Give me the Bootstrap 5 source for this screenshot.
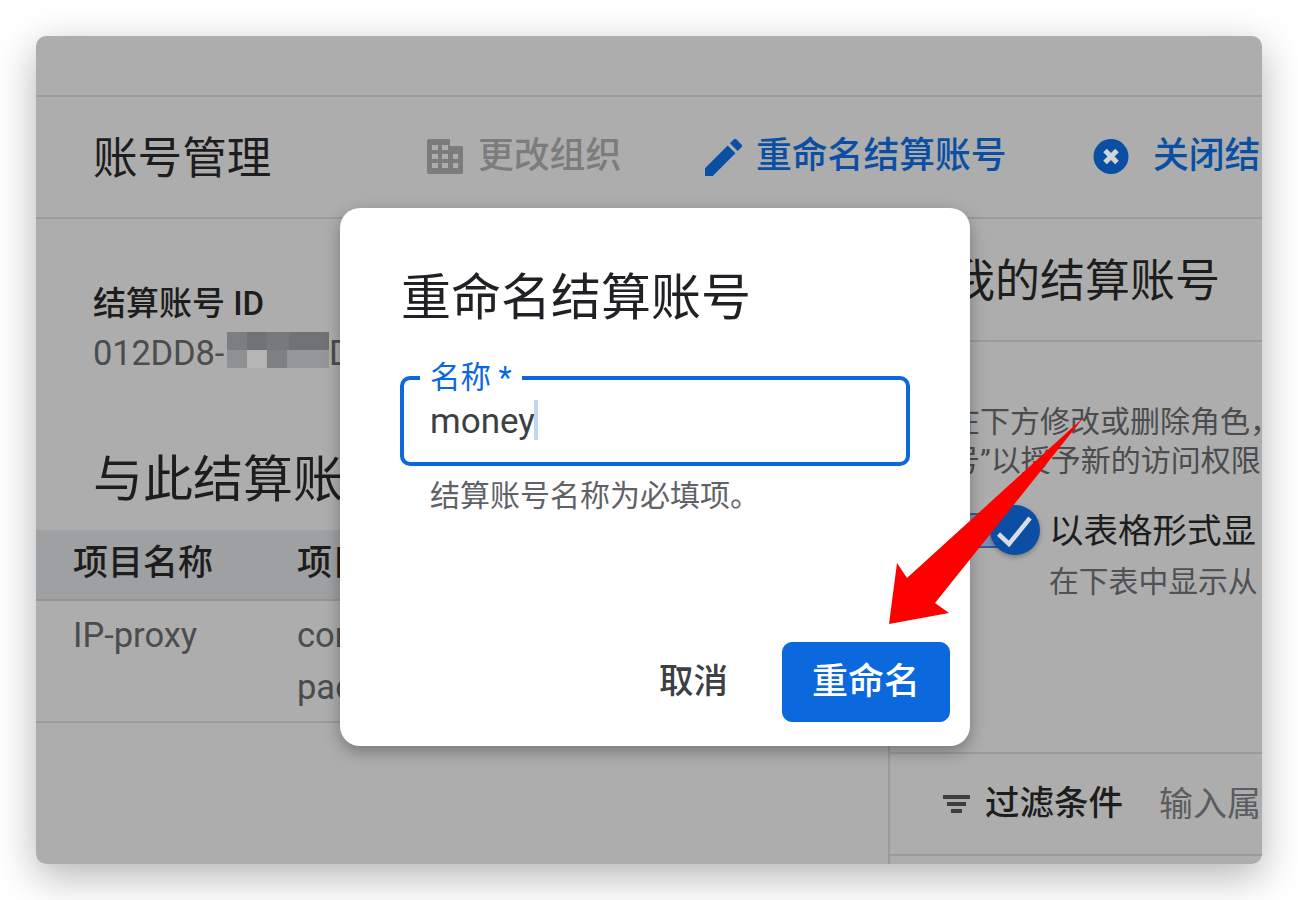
<!DOCTYPE html>
<html lang="zh-CN">
<head>
<meta charset="utf-8">
<title>重命名结算账号</title>
<link href="https://cdn.jsdelivr.net/npm/bootstrap@5.3.0/dist/css/bootstrap.min.css" rel="stylesheet">
<style>
html,body{height:900px;overflow:hidden;background:#fff;}
body{font-family:Roboto,"Noto Sans CJK SC",sans-serif;color:#202124;}
.shot-page{padding:36px;height:900px;}
.win{position:relative;width:1226px;height:828px;background:#adadad;border-radius:10px;overflow:hidden;white-space:nowrap;}
.win-wrap{border-radius:10px;box-shadow:0 12px 40px rgba(0,0,0,.3);width:1226px;height:828px;}
.topbar{height:61px;border-bottom:2px solid #9b9b9b;flex:none;}
.tools{height:122px;border-bottom:2px solid #9b9b9b;flex:none;padding-left:57px;}
.page-title{font-size:44.6px;font-weight:400;margin:5px 0 0;color:#1d1d1d;width:334px;flex:none;}
.tool{font-size:35.8px;font-weight:500;line-height:1;flex:none;}
.tool svg{flex:none;}
.tool-off{color:#7c7c7c;width:278px;gap:15px;}
.tool-on{color:#0b4fa3;}
.tool-edit{width:388px;gap:14px;}
.tool-close{gap:24px;}
.body-row{height:645px;}
.left-pane{width:854px;flex:none;border-right:2px solid #9b9b9b;padding-top:62px;}
.acct{padding-left:57px;}
.acct-label{font-size:33px;font-weight:500;line-height:46px;color:#1d1d1d;}
.acct-val{font-size:34.5px;line-height:52px;height:52px;color:#4a4c4e;letter-spacing:-.2px;}
.redact{width:102px;height:36px;margin:-6px 0 0 3px;flex:none;}
.sec-title{font-size:50px;font-weight:400;line-height:64px;padding-left:57px;margin:69px 0 18px;color:#1d1d1d;}
.proj{--bs-table-bg:transparent;--bs-table-color:#4a4c4e;--bs-table-border-color:#9b9b9b;margin:0;table-layout:fixed;width:852px;}
.proj th{background:#9ea0a2;font-size:35px;font-weight:500;color:#1d1d1d;height:70px;padding:0 0 0 37px;vertical-align:middle;border-bottom:2px solid #949494;}
.proj th.c1,.proj td.c1{width:261px;}
.proj td{font-size:34.5px;line-height:52px;padding:8px 0 8px 37px;color:#4a4c4e;border-bottom:2px solid #9b9b9b;}
.proj td.c2{padding-left:0;}
.proj th.c2{padding-left:0;}
.right-pane{flex:1;min-width:0;}
.rp-head{height:123px;border-bottom:2px solid #9b9b9b;padding:36px 0 0 60px;font-size:45px;line-height:54px;color:#1d1d1d;}
.rp-copy{font-size:30px;line-height:38.5px;color:#4a4c4e;padding:61px 0 0 60px;}
.rp-toggle{margin:25px 0 0 60px;gap:9px;}
.sw{position:relative;width:90px;height:50px;flex:none;}
.sw-track{position:absolute;left:0;right:40px;top:8px;height:35px;background:#7d8fb2;border:2px solid #2f5da3;border-radius:4px;}
.sw-knob{position:absolute;right:0;top:0;width:50px;height:50px;border-radius:50%;background:#0b4ea3;box-shadow:0 2px 5px rgba(0,0,0,.3);}
.sw-knob svg{display:block;}
.tg-main{font-size:34.5px;line-height:46px;color:#1d1d1d;margin-top:3px;}
.tg-sub{font-size:29.8px;line-height:40px;margin-top:8px;color:#4f5153;}
.filter-bar{margin-top:150px;height:104px;border-top:2px solid #9b9b9b;border-bottom:2px solid #9b9b9b;padding-left:53px;}
.filter-bar svg{flex:none;}
.filter-name{font-size:34.5px;font-weight:500;color:#1d1d1d;margin-left:15px;}
.filter-hint{font-size:34px;color:#5a5c5e;margin-left:36px;}
.dlg{position:absolute;left:304px;top:172px;width:630px;height:538px;background:#fff;border:0;border-radius:20px;box-shadow:0 6px 16px rgba(0,0,0,.3);padding:0;}
.dlg-title{font-size:50px;font-weight:400;line-height:66px;color:#202124;margin:57px 0 0 61px;}
.field{position:relative;margin:45px 60px 0;height:90px;}
.field-input{height:90px;border:4px solid #0b69dd;border-radius:10px;padding:0 26px;font-size:35px;color:#3c4043;font-family:inherit;box-shadow:none;}
.field-input:focus{border-color:#0b69dd;box-shadow:none;}
.field-label{position:absolute;left:20px;top:-17px;background:#fff;padding:0 10px;font-size:30.5px;line-height:38px;color:#0b69dd;}
.field-caret{position:absolute;left:134px;top:24px;width:4px;height:40px;background:#c3d7f1;}
.field-help{font-size:30px;line-height:40px;color:#5f6368;margin:10px 0 0 90px;}
.dlg-foot{padding:0 20px 24px 0;gap:54px;}
.dlg-cancel{font-size:34.5px;font-weight:500;color:#3c4043;padding:0;border:0;background:none;}
.dlg-ok{width:168px;height:80px;background:#0b69dd;border-color:#0b69dd;border-radius:10px;font-size:36px;font-weight:500;padding:0;}
.arrow{position:absolute;left:0;top:0;width:1226px;height:828px;pointer-events:none;}
</style>
</head>
<body class="m-0">
<div class="shot-page">
  <div class="win-wrap">
  <div class="win d-flex flex-column">
    <div class="topbar"></div>
    <div class="tools d-flex align-items-center">
      <h1 class="page-title">账号管理</h1>
      <div class="tool tool-off d-flex align-items-center">
        <svg width="36" height="35" viewBox="0 0 36 35" fill="#7c7c7c"><path fill-rule="evenodd" d="M2 0h21v7h11a2 2 0 0 1 2 2v24a2 2 0 0 1-2 2H2a2 2 0 0 1-2-2V2a2 2 0 0 1 2-2zM5 6v5h6V6zm10 0v5h6V6zM5 15v5h6v-5zm10 0v5h6v-5zm11 0v5h5v-5zM5 24v5h6v-5zm10 0v5h6v-5zm11 0v5h5v-5z"/></svg>
        <span>更改组织</span>
      </div>
      <div class="tool tool-on tool-edit d-flex align-items-center">
        <svg width="37" height="37" viewBox="3 3 18 18" fill="#0b4fa3"><path d="M3 17.25V21h3.75L17.81 9.94l-3.75-3.75L3 17.25zM20.71 7.04a.996.996 0 0 0 0-1.41l-2.34-2.34a.996.996 0 0 0-1.41 0l-1.83 1.83 3.75 3.75 1.83-1.83z"/></svg>
        <span>重命名结算账号</span>
      </div>
      <div class="tool tool-on tool-close d-flex align-items-center">
        <svg width="36" height="35" viewBox="0 0 36 35"><circle cx="18" cy="17.5" r="17.5" fill="#0b4fa3"/><path d="M12 11.5l12 12M24 11.5l-12 12" stroke="#d2d4d6" stroke-width="5"/></svg>
        <span>关闭结</span>
      </div>
    </div>
    <div class="body-row d-flex">
      <div class="left-pane">
        <div class="acct">
          <div class="acct-label">结算账号 ID</div>
          <div class="acct-val d-flex align-items-center">012DD8-<svg class="redact" viewBox="0 0 102 36" preserveAspectRatio="none"><rect width="102" height="36" fill="#9a9a9c"/><rect width="102" height="18" fill="#717274"/><rect x="0" y="0" width="20" height="18" fill="#7d7e80"/><rect x="40" y="0" width="22" height="18" fill="#78797b"/><rect x="0" y="18" width="20" height="18" fill="#8f9092"/><rect x="20" y="18" width="20" height="18" fill="#b5b5b5"/><rect x="40" y="18" width="20" height="18" fill="#7f8082"/><rect x="60" y="18" width="42" height="18" fill="#959698"/></svg><span>D</span></div>
        </div>
        <h2 class="sec-title">与此结算账号关联的项目</h2>
        <table class="table proj">
          <thead><tr><th class="c1">项目名称</th><th class="c2">项目编号</th></tr></thead>
          <tbody><tr><td class="c1">IP-proxy</td><td class="c2">core-proxy-<br>package</td></tr></tbody>
        </table>
      </div>
      <div class="right-pane">
        <div class="rp-head">我的结算账号</div>
        <div class="rp-copy">在下方修改或删除角色，<br>号”以授予新的访问权限</div>
        <div class="rp-toggle d-flex">
          <div class="sw">
            <div class="sw-track"></div>
            <div class="sw-knob"><svg width="50" height="50" viewBox="0 0 50 50" fill="none"><path d="M8.5 29L19 39L40 13" stroke="#d8dde6" stroke-width="4.5"/></svg></div>
          </div>
          <div>
            <div class="tg-main">以表格形式显</div>
            <div class="tg-sub">在下表中显示从</div>
          </div>
        </div>
        <div class="filter-bar d-flex align-items-center">
          <svg width="27" height="18" viewBox="0 0 27 18" fill="#3c3e40"><path d="M0 0h27v4H0zM4 7h19v4H4zM8 14h11v4H8z"/></svg>
          <span class="filter-name">过滤条件</span>
          <span class="filter-hint">输入属</span>
        </div>
      </div>
    </div>
    <div class="dlg card">
      <div class="dlg-title">重命名结算账号</div>
      <div class="field">
        <input class="form-control field-input" type="text" value="money" aria-label="名称">
        <span class="field-label">名称 *</span>
        <span class="field-caret"></span>
      </div>
      <div class="field-help">结算账号名称为必填项。</div>
      <div class="dlg-foot d-flex justify-content-end align-items-center mt-auto">
        <button class="btn dlg-cancel" type="button">取消</button>
        <button class="btn btn-primary dlg-ok" type="button">重命名</button>
      </div>
    </div>
    <svg class="arrow" viewBox="36 36 1226 828"><path fill="#fe0000" d="M1084 417L935 603L949 613L889 624L897 563L907 578Z"/></svg>
  </div>
  </div>
</div>
<script src="https://cdn.jsdelivr.net/npm/bootstrap@5.3.0/dist/js/bootstrap.bundle.min.js"></script>
</body>
</html>
